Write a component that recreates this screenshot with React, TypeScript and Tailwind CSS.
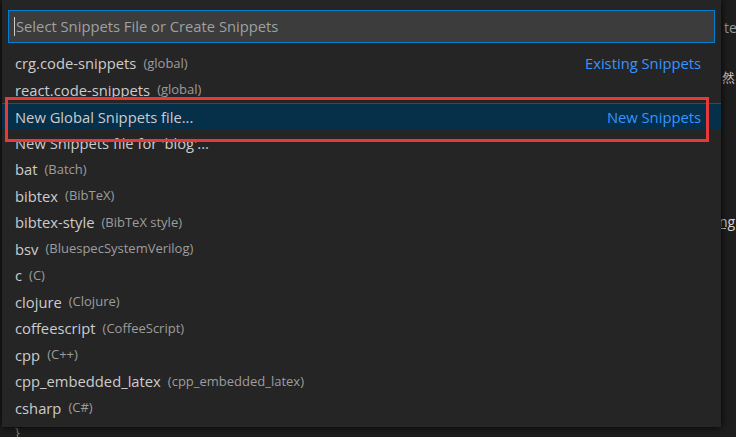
import React from 'react';

type Item = { label: string; desc?: string; right?: string; active?: boolean; sepTop?: boolean };

const ITEMS: Item[] = [
  { label: 'crg.code-snippets', desc: '(global)', right: 'Existing Snippets' },
  { label: 'react.code-snippets', desc: '(global)' },
  { label: 'New Global Snippets file...', right: 'New Snippets', active: true, sepTop: true },
  { label: "New Snippets file for 'blog'..." },
  { label: 'bat', desc: '(Batch)' },
  { label: 'bibtex', desc: '(BibTeX)' },
  { label: 'bibtex-style', desc: '(BibTeX style)' },
  { label: 'bsv', desc: '(BluespecSystemVerilog)' },
  { label: 'c', desc: '(C)' },
  { label: 'clojure', desc: '(Clojure)' },
  { label: 'coffeescript', desc: '(CoffeeScript)' },
  { label: 'cpp', desc: '(C++)' },
  { label: 'cpp_embedded_latex', desc: '(cpp_embedded_latex)' },
  { label: 'csharp', desc: '(C#)' },
];

export default function App() {
  return (
    <div
      className="relative w-[736px] h-[437px] overflow-hidden bg-[#1e1e1e]"
      style={{ fontFamily: '"Open Sans", "Noto Sans", sans-serif' }}
    >
      {/* editor text peeking out behind the picker */}
      <div className="absolute left-[724px] top-[17px] text-[14px] text-[#9a9a9a] whitespace-nowrap">ter</div>
      <div className="absolute left-[722px] top-[68px] text-[13px] text-[#cccccc] whitespace-nowrap">然</div>
      <div className="absolute left-[719px] top-[211px] text-[14px] text-[#d4d4d4] underline whitespace-nowrap">ng</div>
      <div className="absolute left-[15px] top-[423px] text-[13px] text-[#6a9955]">{'}'}</div>

      {/* quick pick panel */}
      <div className="absolute left-[2px] top-0 w-[719px] h-[427px] bg-[#252526] shadow-[0_0_8px_#000000]">
        <div className="px-[6px] pt-[10px] pb-[7px]">
          <div className="h-[33px] border border-[#007fd4] bg-[#3c3c3c] flex items-center pl-[5px]">
            <span className="w-px h-[19px] bg-[#cccccc] mr-px" />
            <span className="text-[14.75px] text-[#a0a0a0]">Select Snippets File or Create Snippets</span>
          </div>
        </div>
        <div>
          {ITEMS.map((it, i) => (
            <div
              key={i}
              className={`h-[26.5px] flex items-center pl-[13px] pr-[20px] whitespace-nowrap ${
                it.active ? 'bg-[#062f4a]' : ''
              } ${it.sepTop ? 'border-t border-[#454545]' : ''}`}
            >
              <span className="text-[14.75px] text-[#cccccc]">{it.label}</span>
              {it.desc && <span className="ml-[7px] text-[13px] text-[#9d9d9d]">{it.desc}</span>}
              {it.right && <span className="ml-auto text-[14.75px] text-[#3794ff]">{it.right}</span>}
            </div>
          ))}
        </div>
      </div>

      {/* red annotation box */}
      <div className="absolute left-[5px] top-[97px] w-[704px] h-[45px] border-[3px] border-[#e8393a]" />
    </div>
  );
}
